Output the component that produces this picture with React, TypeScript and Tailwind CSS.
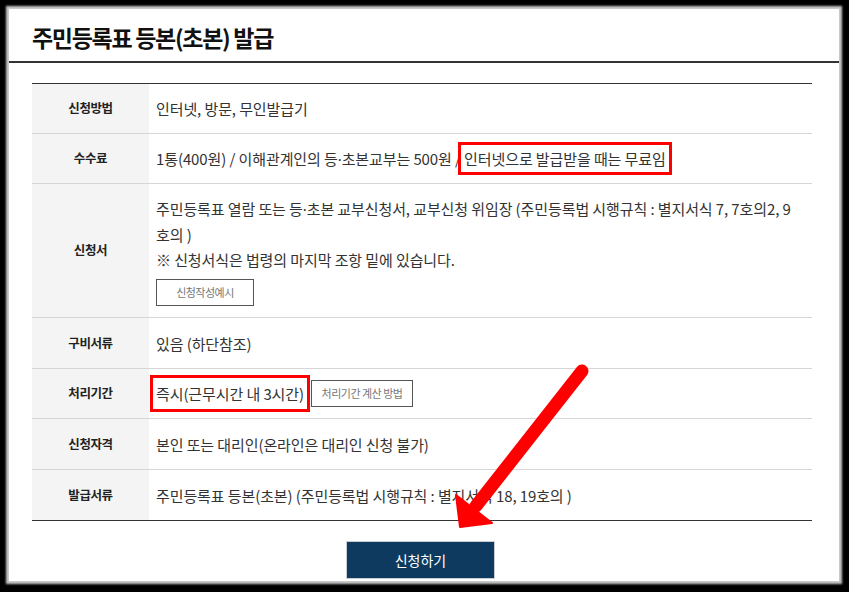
import React from "react";

const FONT = { fontFamily: '"Noto Sans CJK KR", "Noto Sans", sans-serif' };

function Dot() {
  return <span style={{ fontFamily: '"Noto Sans", sans-serif' }}>·</span>;
}

function Row({
  label,
  h,
  last,
  children,
}: {
  label: string;
  h: string;
  last?: boolean;
  children: React.ReactNode;
}) {
  return (
    <div className={`flex ${h} ${last ? "" : "border-b border-[#d6d6d6]"}`}>
      <div className="w-[117px] shrink-0 bg-[#f4f4f4] flex items-center justify-center text-[12.5px] font-bold text-[#222] tracking-[-0.4px]">
        {label}
      </div>
      <div className="flex-1 flex items-center pl-[7px] text-[15px] leading-[25px] text-[#333] tracking-[-0.1px]">
        {children}
      </div>
    </div>
  );
}

export default function App() {
  return (
    <div className="w-[849px] h-[592px] bg-black relative overflow-hidden" style={FONT}>
      <div className="absolute left-[9px] top-[9px] w-[830px] h-[572px] bg-white shadow-[0_0_2px_3px_#c8c8c8] overflow-hidden flex flex-col">
        {/* header */}
        <div className="h-[54px] pl-[23px] pt-[13px] border-b-2 border-[#333] shrink-0">
          <h1 className="text-[23px] leading-[30px] font-bold text-[#111] tracking-[-1.3px]">
            주민등록표 등본(초본) 발급
          </h1>
        </div>

        {/* table */}
        <div className="ml-[23px] w-[780px] mt-[20px] border-t border-b border-[#333]">
          <Row label="신청방법" h="h-[50px]">
            인터넷, 방문, 무인발급기
          </Row>
          <Row label="수수료" h="h-[50px]">
            <span className="whitespace-nowrap">
              1통(400원) / 이해관계인의 등<Dot />초본교부는 500원 /{" "}
              <span className="outline-3 outline-[#ff0000] outline-offset-[3px]">
                인터넷으로 발급받을 때는 무료임
              </span>
            </span>
          </Row>
          <Row label="신청서" h="h-[134px]">
            <div className="flex flex-col items-start">
              <div className="whitespace-nowrap">
                주민등록표 열람 또는 등<Dot />초본 교부신청서, 교부신청 위임장 (주민등록법 시행규칙 : 별지서식 7, 7호의2, 9
              </div>
              <div className="whitespace-nowrap">호의 )</div>
              <div className="whitespace-nowrap">※ 신청서식은 법령의 마지막 조항 밑에 있습니다.</div>
              <div className="mt-[7px] w-[98px] h-[27px] border border-[#555] flex items-center justify-center text-[11px] leading-none text-[#777] tracking-[-0.5px]">
                신청작성예시
              </div>
            </div>
          </Row>
          <Row label="구비서류" h="h-[51px]">
            있음 (하단참조)
          </Row>
          <Row label="처리기간" h="h-[50px]">
            <span className="whitespace-nowrap outline-3 outline-[#ff0000] outline-offset-[3px]">
              즉시(근무시간 내 3시간)
            </span>
            <div className="ml-[7px] w-[102px] h-[27px] border border-[#555] flex items-center justify-center text-[11px] leading-none text-[#777] tracking-[-0.5px]">
              처리기간 계산 방법
            </div>
          </Row>
          <Row label="신청자격" h="h-[51px]">
            본인 또는 대리인(온라인은 대리인 신청 불가)
          </Row>
          <Row label="발급서류" h="h-[50px]" last>
            주민등록표 등본(초본) (주민등록법 시행규칙 : 별지서식 18, 19호의 )
          </Row>
        </div>

        {/* submit */}
        <div className="ml-[337px] mt-[20px] w-[149px] h-[38px] bg-[#0e3a5f] border border-[#c9ced4] flex items-center justify-center text-[14px] text-white shrink-0">
          신청하기
        </div>
      </div>

      {/* annotation arrow */}
      <svg className="absolute left-0 top-0" width="849" height="592" viewBox="0 0 849 592">
        <line x1="582" y1="371" x2="476" y2="506" stroke="#ff0000" strokeWidth="13" strokeLinecap="round" />
        <polygon points="460,527 456,495 492,523" fill="#ff0000" stroke="#ff0000" strokeWidth="2" strokeLinejoin="round" />
      </svg>
    </div>
  );
}
